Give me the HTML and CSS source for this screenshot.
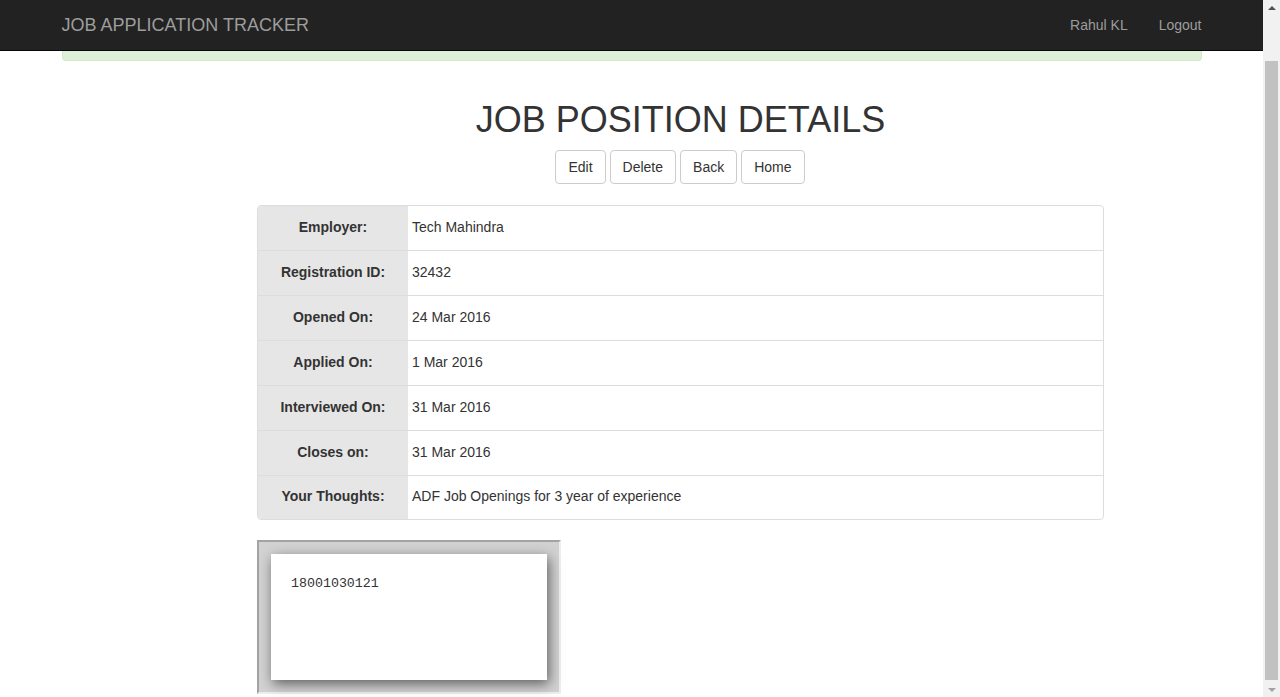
FILE: index.html
```html
<!DOCTYPE html>
<html>
<head>
<meta charset="utf-8">
<title>Job Application Tracker</title>
<link rel="stylesheet" href="styles.css">
</head>
<body>
<div class="window">
  <div class="page">
    <nav class="navbar">
      <div class="container nav-inner">
        <a class="brand">JOB APPLICATION TRACKER</a>
        <ul class="nav-right">
          <li><a>Rahul KL</a></li>
          <li><a>Logout</a></li>
        </ul>
      </div>
    </nav>
    <div class="container">
      <div class="alert"></div>
    </div>
    <main class="content">
      <h1 class="title">JOB POSITION DETAILS</h1>
      <div class="actions">
        <button class="btn">Edit</button>
        <button class="btn">Delete</button>
        <button class="btn">Back</button>
        <button class="btn">Home</button>
      </div>
      <table class="details">
        <tr><th>Employer:</th><td>Tech Mahindra</td></tr>
        <tr><th>Registration ID:</th><td>32432</td></tr>
        <tr><th>Opened On:</th><td>24 Mar 2016</td></tr>
        <tr><th>Applied On:</th><td>1 Mar 2016</td></tr>
        <tr><th>Interviewed On:</th><td>31 Mar 2016</td></tr>
        <tr><th>Closes on:</th><td>31 Mar 2016</td></tr>
        <tr><th>Your Thoughts:</th><td>ADF Job Openings for 3 year of experience</td></tr>
      </table>
      <div class="frame">
        <div class="card">18001030121</div>
      </div>
    </main>
  </div>
  <div class="scrollbar">
    <div class="arrow up"></div>
    <div class="track"><div class="thumb"></div></div>
    <div class="arrow down"></div>
  </div>
</div>
</body>
</html>
```

FILE: styles.css
```css
* { box-sizing: border-box; }
html, body {
  margin: 0;
  padding: 0;
  height: 697px;
  overflow: hidden;
  background: #fff;
}
body {
  font-family: "Liberation Sans", Arial, Helvetica, sans-serif;
  font-size: 14px;
  line-height: 1.42857;
  color: #333;
}
.window {
  display: flex;
  height: 697px;
}
.page {
  flex: 1;
  min-width: 0;
  overflow: hidden;
  display: flex;
  flex-direction: column;
}
.container {
  width: 1170px;
  margin: 0 auto;
  padding: 0 15px;
}
.navbar {
  flex: none;
  height: 51px;
  background: #222;
  border-bottom: 1px solid #080808;
}
.nav-inner {
  display: flex;
  align-items: center;
  justify-content: space-between;
  height: 50px;
}
.brand {
  font-size: 18px;
  line-height: 20px;
  color: #9d9d9d;
  padding: 15px 0 15px 0;
}
.nav-right {
  list-style: none;
  display: flex;
  margin: 0 -15px 0 0;
  padding: 0;
}
.nav-right a {
  display: block;
  padding: 15px;
  line-height: 20px;
  color: #9d9d9d;
}
.nav-right li:first-child a {
  padding-right: 16px;
}
.alert {
  height: 10px;
  margin-bottom: 20px;
  background: #dff0d8;
  border: 1px solid #d6e9c6;
  border-top: none;
  border-radius: 0 0 4px 4px;
}
.content {
  flex: none;
  width: 847px;
  margin: 0 0 0 257px;
}
.title {
  margin: 19px 0 10px;
  font-size: 36px;
  font-weight: 500;
  line-height: 1.1;
  text-align: center;
  color: #333;
}
.actions {
  display: flex;
  justify-content: center;
  gap: 4px;
  margin-left: -1px;
}
.btn {
  font-family: inherit;
  font-size: 14px;
  line-height: 20px;
  padding: 6px 12px;
  color: #333;
  background: #fff;
  border: 1px solid #ccc;
  border-radius: 4px;
}
.details {
  margin-top: 21px;
  width: 847px;
  border-collapse: separate;
  border-spacing: 0;
  border: 1px solid #ddd;
  border-radius: 4px;
  overflow: hidden;
}
.details th, .details td {
  height: 45px;
  padding: 0 4px;
  vertical-align: middle;
  border-top: 1px solid #ddd;
}
.details tr:first-child th, .details tr:first-child td {
  border-top: none;
  height: 44px;
}
.details tr:last-child th, .details tr:last-child td {
  height: 44px;
}
.details th {
  width: 150px;
  background: #e6e6e6;
  text-align: center;
  font-weight: bold;
}
.details td {
  text-align: left;
}
.frame {
  margin-top: 20px;
  width: 304px;
  height: 154px;
  padding: 12px;
  background: #d2d2d2;
  border: 2px solid;
  border-color: #a3a3a3 #eeeeee #eeeeee #a3a3a3;
}
.card {
  width: 276px;
  height: 126px;
  background: #fff;
  padding: 22px 20px;
  font-family: "Liberation Mono", "Courier New", monospace;
  font-size: 13.3px;
  line-height: 15px;
  color: #333;
  box-shadow: 2px 4px 12px rgba(0, 0, 0, 0.55);
}
.scrollbar {
  width: 17px;
  flex: 0 0 17px;
  background: #f1f1f1;
  display: flex;
  flex-direction: column;
}
.arrow {
  height: 17px;
  position: relative;
}
.arrow::after {
  content: "";
  position: absolute;
  left: 5px;
  top: 6px;
  border-left: 4px solid transparent;
  border-right: 4px solid transparent;
}
.arrow.up::after {
  border-bottom: 4px solid #505050;
}
.arrow.down::after {
  border-top: 4px solid #a3a3a3;
}
.track {
  flex: 1;
  padding: 45px 2px 2px;
}
.thumb {
  height: 619px;
  background: #c1c1c1;
}
```
